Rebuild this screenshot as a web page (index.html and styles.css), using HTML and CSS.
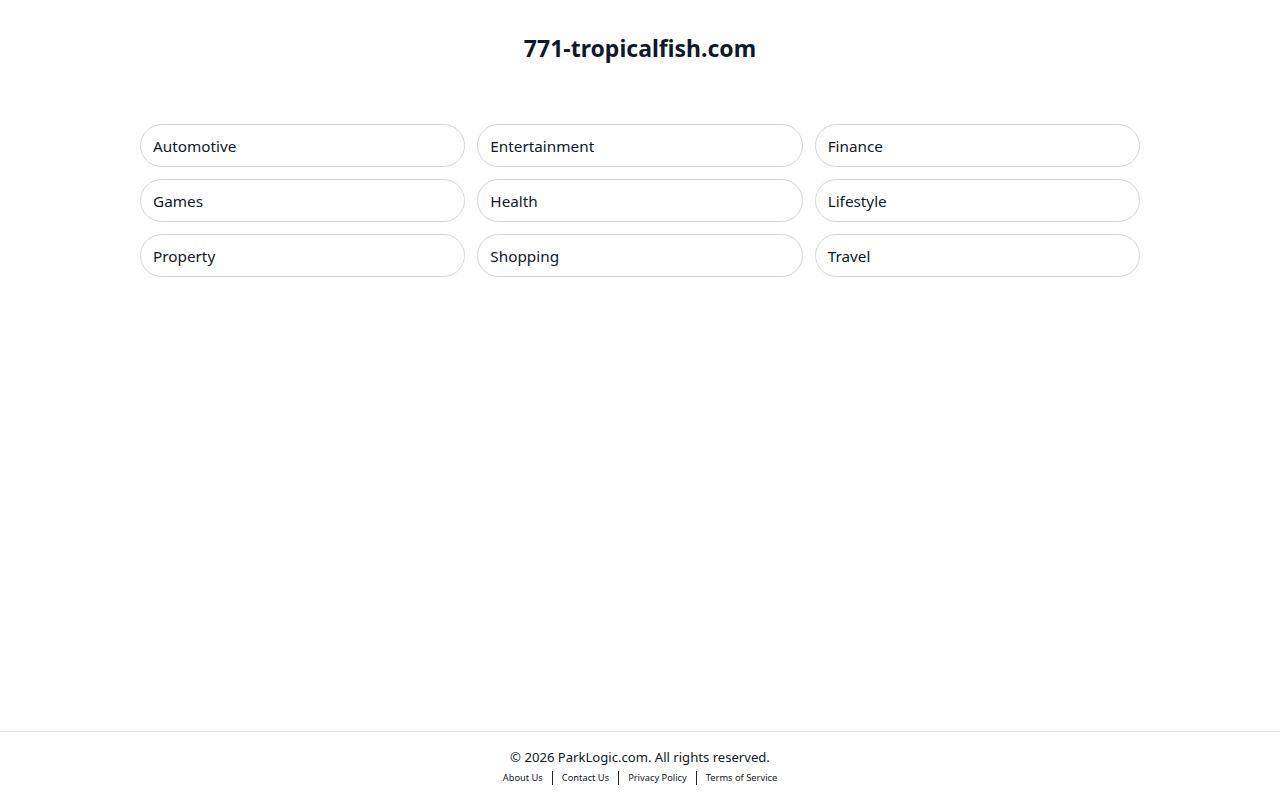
FILE: index.html
```html
<!DOCTYPE html>
<html lang="en">
<head>
<meta charset="utf-8">
<title>771-tropicalfish.com</title>
<link rel="stylesheet" href="styles.css">
</head>
<body>
<div class="page">
  <main class="main">
    <h1 class="title">771-tropicalfish.com</h1>
    <div class="grid">
      <a class="card" href="#">Automotive</a>
      <a class="card" href="#">Entertainment</a>
      <a class="card" href="#">Finance</a>
      <a class="card" href="#">Games</a>
      <a class="card" href="#">Health</a>
      <a class="card" href="#">Lifestyle</a>
      <a class="card" href="#">Property</a>
      <a class="card" href="#">Shopping</a>
      <a class="card" href="#">Travel</a>
    </div>
  </main>
  <footer class="footer">
    <p class="copy">© 2026 ParkLogic.com. All rights reserved.</p>
    <nav class="links">
      <a href="#">About Us</a>
      <a href="#">Contact Us</a>
      <a href="#">Privacy Policy</a>
      <a href="#">Terms of Service</a>
    </nav>
  </footer>
</div>
</body>
</html>
```

FILE: styles.css
```css
* { box-sizing: border-box; }
html, body { margin: 0; padding: 0; }
body {
  font-family: "Segoe UI", "Noto Sans", "Open Sans", sans-serif;
  color: #111827;
  background: #fff;
}
.page {
  min-height: 100vh;
  display: flex;
  flex-direction: column;
}
.main {
  flex: 1;
  width: 1000px;
  margin: 0 auto;
}
.title {
  margin: 0;
  padding-top: 31px;
  font-size: 23px;
  line-height: 34px;
  font-weight: 700;
  text-align: center;
}
.grid {
  margin-top: 59px;
  display: grid;
  grid-template-columns: repeat(3, 1fr);
  gap: 12px;
}
.card {
  display: flex;
  align-items: center;
  height: 43px;
  padding: 0 12px;
  border: 1px solid #d1d5db;
  border-radius: 22px;
  color: #111827;
  text-decoration: none;
  font-size: 15.3px;
}
.footer {
  height: 69px;
  border-top: 1px solid #e5e7eb;
  text-align: center;
  padding-top: 15px;
}
.copy {
  margin: 0;
  font-size: 13.1px;
  line-height: 20px;
}
.links {
  margin-top: 4px;
  display: flex;
  justify-content: center;
  align-items: center;
  font-size: 9.3px;
  line-height: 14px;
}
.links a {
  color: #111827;
  text-decoration: none;
  padding: 0 9px;
  border-left: 1px solid #222;
}
.links a:first-child { border-left: none; }
```
